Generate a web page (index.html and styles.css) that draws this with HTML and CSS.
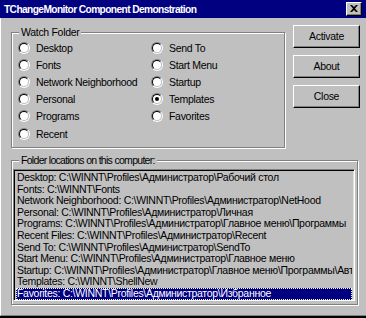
FILE: index.html
```html
<!DOCTYPE html>
<html>
<head>
<meta charset="utf-8">
<title>TChangeMonitor Component Demonstration</title>
<link rel="stylesheet" href="styles.css">
</head>
<body>
<div class="window">
  <div class="titlebar">
    <span class="title">TChangeMonitor Component Demonstration</span>
    <span class="close-box">
      <svg width="8" height="7" viewBox="0 0 8 7"><path d="M0 0h2l2 2 2-2h2L5 3.5 8 7H6L4 5 2 7H0l3-3.5z" fill="#000"/></svg>
    </span>
  </div>
  <div class="client">
    <div class="top">
      <div class="group watch">
        <span class="group-label">Watch Folder</span>
        <div class="radios">
          <div class="radio"><span class="circle"></span>Desktop</div>
          <div class="radio"><span class="circle"></span>Fonts</div>
          <div class="radio"><span class="circle"></span>Network Neighborhood</div>
          <div class="radio"><span class="circle"></span>Personal</div>
          <div class="radio"><span class="circle"></span>Programs</div>
          <div class="radio"><span class="circle"></span>Recent</div>
          <div class="radio"><span class="circle"></span>Send To</div>
          <div class="radio"><span class="circle"></span>Start Menu</div>
          <div class="radio"><span class="circle"></span>Startup</div>
          <div class="radio"><span class="circle checked"></span>Templates</div>
          <div class="radio"><span class="circle"></span>Favorites</div>
        </div>
      </div>
      <div class="buttons">
        <div class="btn">Activate</div>
        <div class="btn">About</div>
        <div class="btn">Close</div>
      </div>
    </div>
    <div class="group locations">
      <span class="group-label">Folder locations on this computer:</span>
      <div class="listbox">
        <div class="item">Desktop: C:\WINNT\Profiles\Администратор\Рабочий стол</div>
        <div class="item">Fonts: C:\WINNT\Fonts</div>
        <div class="item">Network Neighborhood: C:\WINNT\Profiles\Администратор\NetHood</div>
        <div class="item">Personal: C:\WINNT\Profiles\Администратор\Личная</div>
        <div class="item">Programs: C:\WINNT\Profiles\Администратор\Главное меню\Программы</div>
        <div class="item">Recent Files: C:\WINNT\Profiles\Администратор\Recent</div>
        <div class="item">Send To: C:\WINNT\Profiles\Администратор\SendTo</div>
        <div class="item">Start Menu: C:\WINNT\Profiles\Администратор\Главное меню</div>
        <div class="item">Startup: C:\WINNT\Profiles\Администратор\Главное меню\Программы\Автозагрузка</div>
        <div class="item">Templates: C:\WINNT\ShellNew</div>
        <div class="item selected"><span class="focus">Favorites: C:\WINNT\Profiles\Администратор\Избранное</span></div>
      </div>
    </div>
  </div>
</div>
</body>
</html>
```

FILE: styles.css
```css
* { box-sizing: border-box; }
html, body { margin: 0; padding: 0; background: #c0c0c0; }
body {
  font-family: "Liberation Sans", Arial, sans-serif;
  font-size: 10.5px;
  color: #000;
  letter-spacing: -0.3px;
}
.window {
  width: 366px;
  height: 318px;
  background: #c0c0c0;
  border-bottom: 2px solid #000;
  display: flex;
  flex-direction: column;
  overflow: hidden;
}
.titlebar {
  height: 18px;
  flex: none;
  background: #000080;
  color: #fff;
  display: flex;
  align-items: center;
  justify-content: space-between;
  padding: 0 4px 0 4px;
}
.title {
  font-weight: bold;
  font-size: 10.2px;
  letter-spacing: -0.6px;
}
.close-box {
  width: 16px;
  height: 14px;
  background: #c0c0c0;
  border-top: 1px solid #fff;
  border-left: 1px solid #fff;
  border-right: 1px solid #000;
  border-bottom: 1px solid #000;
  box-shadow: inset -1px -1px 0 #808080;
  display: flex;
  align-items: center;
  justify-content: center;
  padding-right: 1px;
  padding-bottom: 1px;
}
.client {
  flex: 1;
  border-bottom: 1px solid #808080;
  border-left: 1px solid #fff;
  padding: 7px 0 0 10px;
}
.top {
  display: grid;
  grid-template-columns: 274px 67px;
  column-gap: 8px;
}
.group {
  position: relative;
  border: 1px solid #808080;
  box-shadow: 1px 1px 0 #fff, inset 1px 1px 0 #fff;
}
.group-label {
  position: absolute;
  top: -7px;
  left: 7px;
  padding: 0 2px;
  background: #c0c0c0;
  line-height: 12px;
}
.locations .group-label {
  letter-spacing: -0.7px;
}
.watch {
  margin-top: 7px;
  height: 116px;
  padding: 6px 0 0 6px;
}
.radios {
  display: grid;
  grid-auto-flow: column;
  grid-template-rows: repeat(6, 17.2px);
  grid-template-columns: 133px 1fr;
}
.radio {
  display: flex;
  align-items: center;
  gap: 6px;
  white-space: nowrap;
}
.circle {
  position: relative;
  width: 12px;
  height: 12px;
  flex: none;
  border-radius: 50%;
  border: 1px solid;
  border-color: #808080 #fff #fff #808080;
}
.circle::before {
  content: "";
  position: absolute;
  inset: 0;
  border-radius: 50%;
  border: 1px solid;
  border-color: #000 #c0c0c0 #c0c0c0 #000;
  background: #fff;
}
.circle.checked::after {
  content: "";
  position: absolute;
  left: 3px;
  top: 3px;
  width: 4px;
  height: 4px;
  border-radius: 50%;
  background: #000;
}
.buttons {
  display: flex;
  flex-direction: column;
  gap: 7px;
}
.btn {
  height: 23px;
  display: flex;
  align-items: center;
  justify-content: center;
  border-top: 1px solid #fff;
  border-left: 1px solid #fff;
  border-right: 1px solid #000;
  border-bottom: 1px solid #000;
  box-shadow: inset -1px -1px 0 #808080;
  padding-bottom: 1px;
}
.locations {
  margin-top: 12px;
  width: 347px;
  height: 145px;
  padding: 8px 2px 0 1px;
}
.listbox {
  height: 132px;
  border-top: 1px solid #808080;
  border-left: 1px solid #808080;
  border-right: 1px solid #fff;
  border-bottom: 1px solid #fff;
  box-shadow: inset 1px 1px 0 #000, inset -1px -1px 0 #dfdfdf;
  padding: 2px 2px 2px 2px;
  overflow: hidden;
  font-size: 10.5px;
  letter-spacing: -0.3px;
}
.item {
  height: 11.6px;
  line-height: 11.6px;
  white-space: nowrap;
  overflow: hidden;
  padding-left: 1px;
}
.item.selected {
  background: #000080;
  color: #fff;
  outline: 1px dotted #fff;
  outline-offset: -1px;
}
```
